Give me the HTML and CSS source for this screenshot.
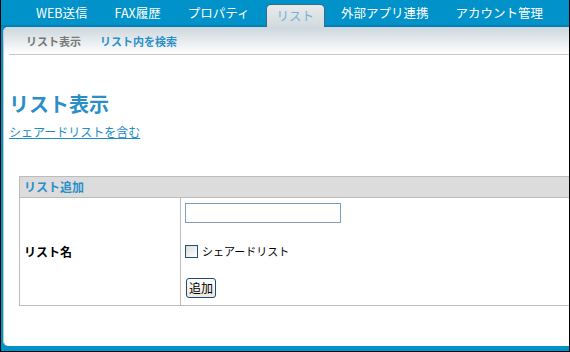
FILE: index.html
```html
<!DOCTYPE html>
<html lang="ja">
<head>
    <meta charset="UTF-8">
    <title>リスト表示</title>
    <link rel="stylesheet" href="styles.css">
</head>
<body>
    <div class="frame">
        <nav class="tabs">
            <a href="#" class="tab">WEB送信</a>
            <a href="#" class="tab">FAX履歴</a>
            <a href="#" class="tab">プロパティ</a>
            <a href="#" class="tab active">リスト</a>
            <a href="#" class="tab">外部アプリ連携</a>
            <a href="#" class="tab">アカウント管理</a>
        </nav>

        <div class="panel">
            <div class="subnav">
                <a href="#" class="current">リスト表示</a>
                <a href="#">リスト内を検索</a>
            </div>

            <div class="content">
                <h1 class="page-title">リスト表示</h1>
                <a href="#" class="shared-link">シェアードリストを含む</a>

                <table class="form-table">
                    <tr>
                        <th colspan="2" class="table-head">リスト追加</th>
                    </tr>
                    <tr>
                        <td class="label">リスト名</td>
                        <td class="field">
                            <input type="text" class="text-input">
                            <label class="check-row">
                                <input type="checkbox" class="check">
                                <span>シェアードリスト</span>
                            </label>
                            <button class="add-btn">追加</button>
                        </td>
                    </tr>
                </table>
            </div>
        </div>
    </div>
</body>
</html>
```

FILE: styles.css
```css
* {
    margin: 0;
    padding: 0;
    box-sizing: border-box;
}

body {
    font-family: "Noto Sans CJK JP", "Liberation Sans", sans-serif;
    background: #fff;
}

.frame {
    width: 570px;
    height: 352px;
    background: #0092c8;
    border: 1px solid #000;
    border-top: none;
    display: flex;
    flex-direction: column;
    overflow: hidden;
}

/* top tabs */
.tabs {
    height: 27px;
    display: flex;
    align-items: flex-end;
    padding-left: 22px;
    border-bottom: 2px solid #0580b4;
}

.tab {
    height: 22px;
    padding: 0 13px;
    margin-right: 1px;
    color: #fff;
    font-size: 12.5px;
    line-height: 20px;
    text-decoration: none;
    white-space: nowrap;
}

.tab.active {
    height: 23px;
    margin-bottom: -2px;
    padding: 0 10px;
    margin-left: 2px;
    margin-right: 3px;
    color: #7cb0d0;
    background: linear-gradient(#e6eaec, #d2dbe0);
    border: 1px solid #3a6a80;
    border-bottom: none;
    border-radius: 5px 5px 0 0;
    line-height: 22px;
}

/* white panel */
.panel {
    flex: 1;
    margin-left: 2px;
    margin-bottom: 5px;
    background: #fff;
    border-left: 1px solid #c8c8c8;
    border-radius: 5px 0 0 5px;
    overflow: hidden;
}

.subnav {
    height: 27px;
    display: flex;
    align-items: center;
    gap: 19px;
    padding-left: 22px;
    background: linear-gradient(#ccd6dc, #fff);
}

.subnav a {
    font-size: 11px;
    font-weight: bold;
    color: #2a8fc8;
    text-decoration: none;
}

.subnav a.current {
    color: #777;
}

.content {
    margin-left: 5px;
    border-top: 1px solid #c8c8c8;
}

.page-title {
    margin-top: 35px;
    font-size: 20px;
    line-height: 28px;
    color: #2a8fc8;
}

.shared-link {
    display: inline-block;
    margin-top: 4px;
    font-size: 12px;
    line-height: 16px;
    color: #1e8cc8;
}

.form-table {
    margin: 34px 0 0 10px;
    width: 620px;
    border-collapse: collapse;
    font-size: 12px;
}

.form-table th,
.form-table td {
    border: 1px solid #bcbcbc;
}

.table-head {
    height: 21px;
    padding: 0 4px;
    background: #dcdcdc;
    color: #2a8fc8;
    text-align: left;
    line-height: 18px;
}

.label {
    width: 161px;
    height: 108px;
    padding: 0 4px;
    font-weight: bold;
    color: #000;
}

.field {
    padding: 5px 5px 5px 4px;
    vertical-align: top;
}

.text-input {
    display: block;
    width: 156px;
    height: 20px;
    border: 1px solid #7f9db9;
}

.check-row {
    display: flex;
    align-items: center;
    gap: 4px;
    margin-top: 20px;
    font-size: 11px;
    color: #000;
}

.check {
    appearance: none;
    width: 13px;
    height: 13px;
    border: 1px solid #1c5180;
    background: linear-gradient(135deg, #dcdcd6, #fff);
}

.add-btn {
    display: block;
    margin: 19px 0 0 1px;
    width: 30px;
    height: 20px;
    font-family: "Noto Sans CJK JP", sans-serif;
    font-size: 12px;
    line-height: 16px;
    color: #000;
    background: linear-gradient(#fff, #ece9d8);
    border: 1px solid #1c4a80;
    border-radius: 3px;
}
```
